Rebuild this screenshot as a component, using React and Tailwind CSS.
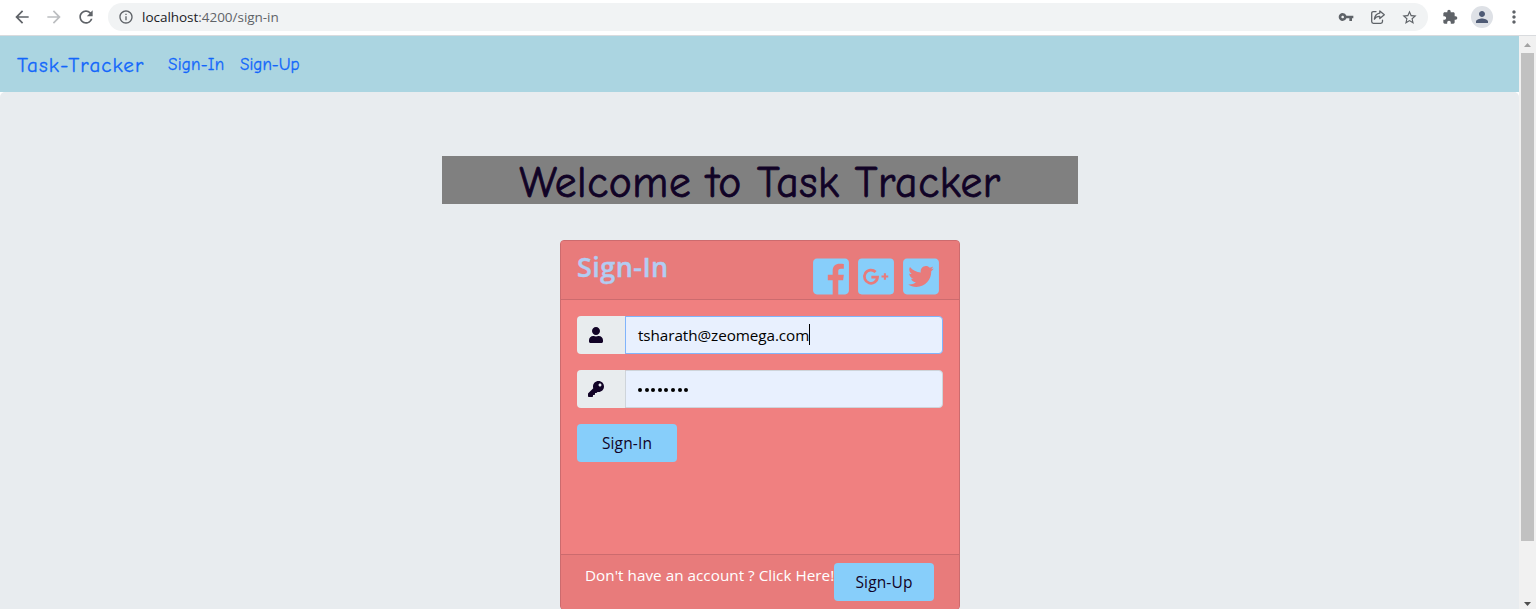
import React from "react";
import {
  MdArrowBack,
  MdArrowForward,
  MdRefresh,
  MdInfoOutline,
  MdVpnKey,
  MdStarBorder,
  MdExtension,
  MdPerson,
  MdMoreVert,
} from "react-icons/md";
import { FaUser, FaKey, FaTwitterSquare } from "react-icons/fa";

const COMIC = "font-['Comic_Sans_MS','Comic_Neue','Lato',sans-serif]";

function ShareIcon() {
  return (
    <svg viewBox="0 0 16 16" className="h-4 w-4" fill="none" stroke="#5f6368" strokeWidth="1.3" strokeLinejoin="round" strokeLinecap="round">
      <path d="M6 2.6H3.4Q1.7 2.6 1.7 4.3V12.6Q1.7 14.3 3.4 14.3H10.8Q12.5 14.3 12.5 12.6V11.2" />
      <path d="M9.8 1.9L14.3 5.8L9.8 9.6V7.4C7.3 7.3 5.6 8.2 4.4 10.2C4.8 6.8 6.6 4.6 9.8 4.1Z" />
    </svg>
  );
}

function FacebookSquare() {
  return (
    <svg viewBox="0 0 448 512" className="h-[41px] w-9" fill="currentColor">
      <path d="M448 80v352c0 26.5-21.5 48-48 48h-85.3V302.8h60.6l8.7-67.6h-69.3V192c0-19.6 5.4-32.9 33.5-32.9H384V98.7c-6.2-.8-27.4-2.7-52.2-2.7-51.6 0-87 31.5-87 89.4v49.9H184v67.6h60.9V480H48c-26.5 0-48-21.5-48-48V80c0-26.5 21.5-48 48-48h352c26.5 0 48 21.5 48 48z" />
    </svg>
  );
}

function GooglePlusSquare() {
  return (
    <svg viewBox="0 0 448 512" className="h-[41px] w-9" fill="none">
      <rect y="32" width="448" height="448" rx="48" fill="currentColor" />
      <path d="M219 200A82 82 0 1 0 243 263H166" stroke="#e87b7b" strokeWidth="34" />
      <path d="M335 214V298M293 256H377" stroke="#e87b7b" strokeWidth="26" />
    </svg>
  );
}

function BrowserBar() {
  return (
    <header className="flex h-9 shrink-0 items-start border-b border-[#d9dbde] bg-white text-[#5f6368]">
      <div className="flex h-[34px] w-[108px] items-center pl-3">
        <MdArrowBack className="h-5 w-5" />
        <MdArrowForward className="ml-3 h-5 w-5 text-[#bcbec1]" />
        <MdRefresh className="ml-3 h-5 w-5" />
      </div>
      <div className="mt-[3px] flex h-7 w-[1320px] items-center rounded-full bg-[#f1f3f4] pr-2.5 pl-2.5">
        <MdInfoOutline className="h-4 w-4" />
        <span className="ml-2 text-[13.5px] leading-5 tracking-[-0.03px] whitespace-nowrap text-[#5f6368]">
          <span className="text-[#202124]">localhost</span>:4200/sign-in
        </span>
        <MdVpnKey className="ml-auto h-4 w-4" />
        <span className="ml-4">
          <ShareIcon />
        </span>
        <MdStarBorder className="ml-[15px] h-[17px] w-[17px]" />
      </div>
      <div className="flex h-[34px] flex-1 items-center pl-3.5">
        <MdExtension className="h-4 w-4" />
        <span className="ml-[13px] flex h-[22px] w-[22px] items-center justify-center rounded-full bg-[#dee1e6]">
          <MdPerson className="h-[18px] w-[18px] text-[#4f5b75]" />
        </span>
        <MdMoreVert className="ml-[11px] h-5 w-5" />
      </div>
    </header>
  );
}

function Navbar() {
  return (
    <nav className={`${COMIC} flex h-14 shrink-0 items-center bg-[#abd5e1] pt-[3px] pl-[17px] whitespace-nowrap text-[#1266fb] [-webkit-text-stroke:0.3px_#1266fb]`}>
      <a className="w-[151px] text-[21px] tracking-[1.08px]">Task-Tracker</a>
      <a className="w-[72px] pb-0.5 text-[17px] tracking-[0.25px]">Sign-In</a>
      <a className="pb-0.5 text-[17px] tracking-[0.05px]">Sign-Up</a>
    </nav>
  );
}

function Field({ icon, active, children }) {
  return (
    <div className="mb-4 flex h-[38px]">
      <span className="flex w-12 items-center rounded-l bg-[#e8ecee] pl-[11px] text-[#110326]">{icon}</span>
      <div
        className={`flex flex-1 items-center rounded-r border bg-[#e8f0fe] pl-3 text-[15.25px] text-black ${
          active ? "border-[#80b4fb]" : "border-[#ced4da]"
        }`}
      >
        {children}
      </div>
    </div>
  );
}

function ActionButton({ children }) {
  return (
    <button className="flex h-[38px] w-[100px] items-center justify-center rounded bg-[#87cefa] pt-0.5 text-[15.5px] tracking-[0.15px] text-[#110326]">
      {children}
    </button>
  );
}

function SignInCard() {
  return (
    <section className="mt-9 h-[370px] w-[400px] overflow-hidden rounded border border-[#cc6b6e] bg-[#f08080]">
      <div className="flex h-[59px] justify-between border-b border-[#cc6b6e] bg-[#e87b7b] pr-5 pl-4">
        <h3 className="pt-1.5 text-[27px] leading-10 font-semibold tracking-[0.45px] whitespace-nowrap text-[#b2cdf2] [-webkit-text-stroke:0.4px_#b2cdf2]">Sign-In</h3>
        <div className="flex gap-[9px] pt-[15.4px] text-[#87cefa]">
          <FacebookSquare />
          <GooglePlusSquare />
          <FaTwitterSquare className="h-[41px] w-9" />
        </div>
      </div>
      <div className="h-[254px] px-4 pt-4">
        <Field icon={<FaUser className="h-4 w-4" />} active>
          <span className="tracking-[-0.07px] whitespace-nowrap">tsharath@zeomega.com</span>
          <span className="-mt-0.5 h-[21px] w-px bg-black" />
        </Field>
        <Field icon={<FaKey className="h-4 w-4" />}>
          <span className="flex gap-[2.6px] pt-0.5">
            {Array.from({ length: 8 }, (_, i) => (
              <i key={i} className="h-1 w-1 rounded-full bg-black" />
            ))}
          </span>
        </Field>
        <ActionButton>Sign-In</ActionButton>
      </div>
      <div className="flex h-[55px] items-start border-t border-[#cc6b6e] bg-[#e87b7b] pt-2 pl-6">
        <span className="w-[249px] text-[15.25px] leading-[25px] tracking-[0.03px] whitespace-nowrap text-white">
          Don't have an account ? Click Here!
        </span>
        <ActionButton>Sign-Up</ActionButton>
      </div>
    </section>
  );
}

function Scrollbar() {
  return (
    <aside className="flex w-[17px] shrink-0 flex-col items-center bg-[#f1f1f1]">
      <svg viewBox="0 0 17 17" className="h-[17px] w-[17px]">
        <path d="M5 11L8.5 7L12 11Z" fill="#a3a3a3" />
      </svg>
      <div className="h-[488px] w-[13px] bg-[#c1c1c1]" />
      <svg viewBox="0 0 17 17" className="mt-auto h-[17px] w-[17px]">
        <path d="M5 10L8.5 14L12 10Z" fill="#505050" />
      </svg>
    </aside>
  );
}

export default function App() {
  return (
    <div className="flex h-[609px] w-[1536px] flex-col overflow-hidden bg-white font-['Segoe_UI','Open_Sans',sans-serif]">
      <BrowserBar />
      <div className="flex min-h-0 flex-1">
        <div className="flex min-w-0 flex-1 flex-col">
          <Navbar />
          <main className="flex min-h-0 flex-1 flex-col items-center overflow-hidden rounded-t-[5px] bg-[#e8ecef] pt-16 pl-px">
            <h1 className={`${COMIC} h-12 w-[636px] shrink-0 bg-[#808080] text-center text-[43.5px] leading-[54px] tracking-[0.6px] whitespace-nowrap text-[#110326] [-webkit-text-stroke:0.8px_#110326]`}>
              Welcome to Task Tracker
            </h1>
            <div className="shrink-0">
              <SignInCard />
            </div>
          </main>
        </div>
        <Scrollbar />
      </div>
    </div>
  );
}
